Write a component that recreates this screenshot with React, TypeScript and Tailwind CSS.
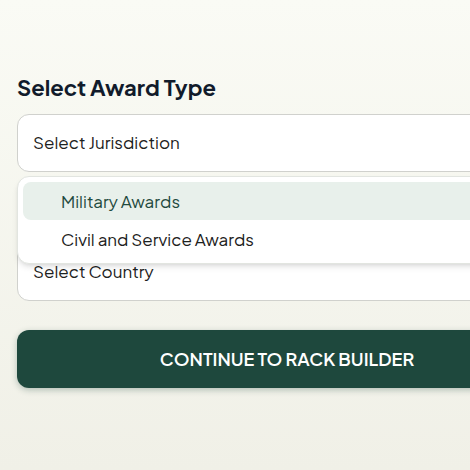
import React, { useState } from "react";

const jurisdictions = ["Military Awards", "Civil and Service Awards"];
const countries = ["United States", "United Kingdom", "Canada"];

const fieldClass =
  "block h-[58px] w-full appearance-none rounded-xl border border-[#d0d1cd] bg-white px-[15px] text-left text-[17px] text-[#1c2120]";

export default function App() {
  const [open, setOpen] = useState(true);
  const [jurisdiction, setJurisdiction] = useState("");

  const pick = (value: string) => {
    setJurisdiction(value);
    setOpen(false);
  };

  return (
    <main className="min-h-screen overflow-hidden bg-linear-to-b from-[#fafbf5] to-[#f0f0e7] px-[17px] pt-[71px] pb-20 font-['Plus_Jakarta_Sans',Inter,sans-serif]">
      <form className="min-w-[540px]" onSubmit={(e) => e.preventDefault()}>
        <h2 id="award-type" className="mb-[11px] text-[22px] leading-8 font-bold text-[#111b2b]">
          Select Award Type
        </h2>

        <div className="relative">
          <button
            type="button"
            role="combobox"
            aria-labelledby="award-type"
            aria-controls="award-list"
            aria-expanded={open}
            onClick={() => setOpen(!open)}
            className={fieldClass}
          >
            {jurisdiction || "Select Jurisdiction"}
          </button>

          {open && (
            <ul
              id="award-list"
              role="listbox"
              aria-labelledby="award-type"
              className="absolute inset-x-0 top-full z-10 mt-1 rounded-xl border border-[#e2e5e0] bg-white p-[5px] shadow-md"
            >
              {jurisdictions.map((name, idx) => (
                <li key={name} role="none">
                  <button
                    type="button"
                    role="option"
                    aria-selected={jurisdiction === name}
                    onClick={() => pick(name)}
                    className={`block h-[38px] w-full rounded-lg pt-px pl-[38px] text-left text-[17px] ${
                      idx === 0 ? "bg-[#e8f0eb] text-[#1f4a3e]" : "bg-white text-[#1c2120]"
                    }`}
                  >
                    {name}
                  </button>
                </li>
              ))}
            </ul>
          )}
        </div>

        <div className="mt-[71px]">
          <select aria-label="Country" defaultValue="" className={fieldClass}>
            <option value="" disabled hidden>
              Select Country
            </option>
            {countries.map((name) => (
              <option key={name}>{name}</option>
            ))}
          </select>
        </div>

        <button
          type="submit"
          className="mt-[29px] h-[58px] w-full rounded-xl bg-[#1e483d] text-lg font-semibold text-white uppercase shadow-[0_2px_6px_rgba(30,72,61,0.3)]"
        >
          Continue to Rack Builder
        </button>
      </form>
    </main>
  );
}
